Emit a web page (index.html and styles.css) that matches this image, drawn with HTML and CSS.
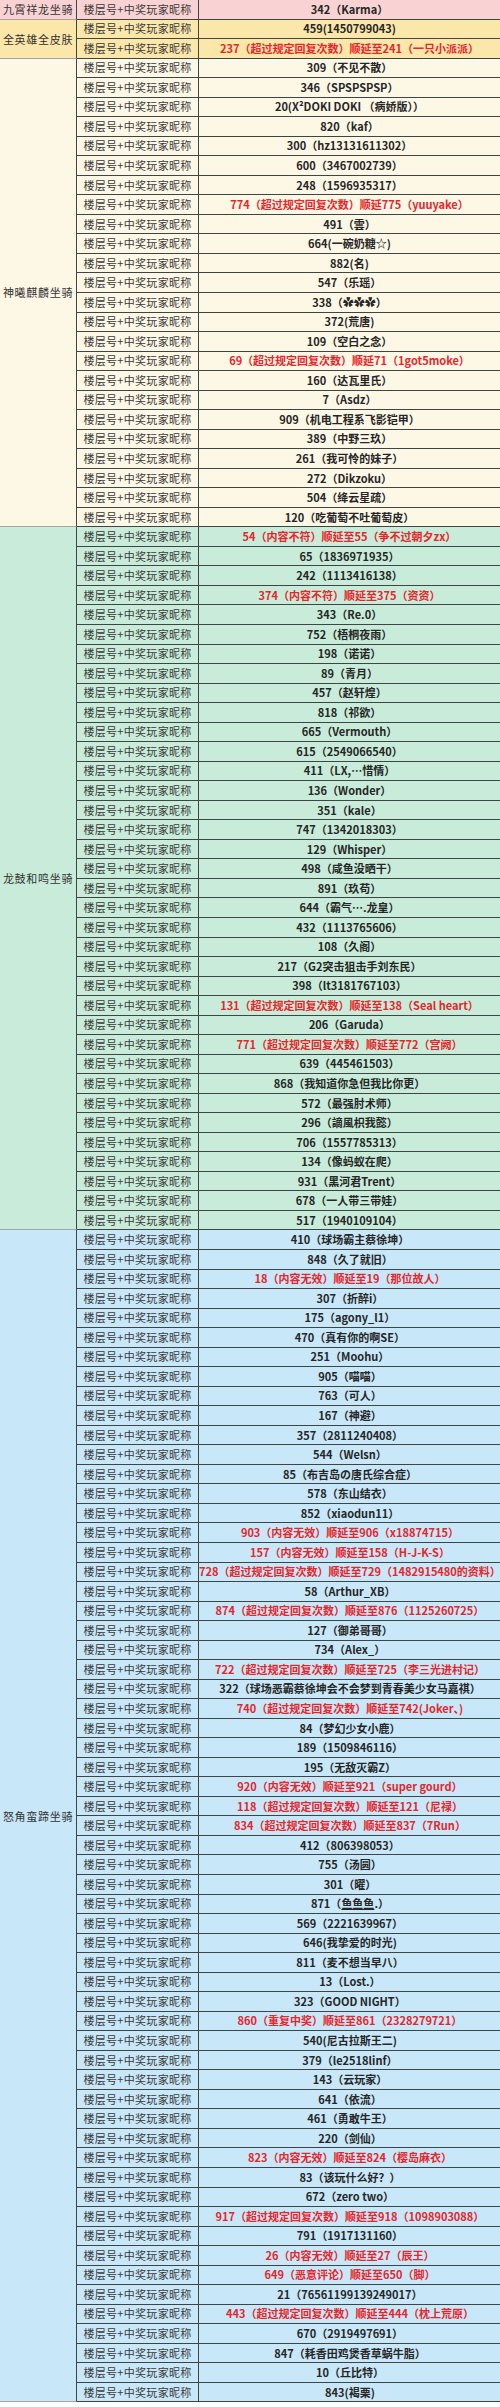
FILE: index.html
```html
<!DOCTYPE html>
<html lang="zh-CN">
<head>
<meta charset="utf-8">
<title>中奖名单</title>
<link rel="stylesheet" href="styles.css">
</head>
<body>
<div class="sheet">

<div class="section pink">
  <div class="label">九霄祥龙坐骑</div>
  <div class="rows">
    <div class="row"><div class="k">楼层号+中奖玩家昵称</div><div class="v">342（Karma）</div></div>
  </div>
</div>

<div class="section gold">
  <div class="label">全英雄全皮肤</div>
  <div class="rows">
    <div class="row"><div class="k">楼层号+中奖玩家昵称</div><div class="v">459(1450799043)</div></div>
    <div class="row"><div class="k">楼层号+中奖玩家昵称</div><div class="v red">237（超过规定回复次数）顺延至241（一只小派派）</div></div>
  </div>
</div>

<div class="section cream">
  <div class="label">神曦麒麟坐骑</div>
  <div class="rows">
    <div class="row"><div class="k">楼层号+中奖玩家昵称</div><div class="v">309（不见不散）</div></div>
    <div class="row"><div class="k">楼层号+中奖玩家昵称</div><div class="v">346（SPSPSPSP）</div></div>
    <div class="row"><div class="k">楼层号+中奖玩家昵称</div><div class="v">20(X²DOKI DOKI （病娇版））</div></div>
    <div class="row"><div class="k">楼层号+中奖玩家昵称</div><div class="v">820（kaf）</div></div>
    <div class="row"><div class="k">楼层号+中奖玩家昵称</div><div class="v">300（hz13131611302）</div></div>
    <div class="row"><div class="k">楼层号+中奖玩家昵称</div><div class="v">600（3467002739）</div></div>
    <div class="row"><div class="k">楼层号+中奖玩家昵称</div><div class="v">248（1596935317）</div></div>
    <div class="row"><div class="k">楼层号+中奖玩家昵称</div><div class="v red">774（超过规定回复次数）顺延775（yuuyake）</div></div>
    <div class="row"><div class="k">楼层号+中奖玩家昵称</div><div class="v">491（雲）</div></div>
    <div class="row"><div class="k">楼层号+中奖玩家昵称</div><div class="v">664(一碗奶糖☆)</div></div>
    <div class="row"><div class="k">楼层号+中奖玩家昵称</div><div class="v">882(名)</div></div>
    <div class="row"><div class="k">楼层号+中奖玩家昵称</div><div class="v">547（乐瑶）</div></div>
    <div class="row"><div class="k">楼层号+中奖玩家昵称</div><div class="v">338（✿✿✿）</div></div>
    <div class="row"><div class="k">楼层号+中奖玩家昵称</div><div class="v">372(荒唐)</div></div>
    <div class="row"><div class="k">楼层号+中奖玩家昵称</div><div class="v">109（空白之念）</div></div>
    <div class="row"><div class="k">楼层号+中奖玩家昵称</div><div class="v red">69（超过规定回复次数）顺延71（1got5moke）</div></div>
    <div class="row"><div class="k">楼层号+中奖玩家昵称</div><div class="v">160（达瓦里氏）</div></div>
    <div class="row"><div class="k">楼层号+中奖玩家昵称</div><div class="v">7（Asdz）</div></div>
    <div class="row"><div class="k">楼层号+中奖玩家昵称</div><div class="v">909（机电工程系飞影铠甲）</div></div>
    <div class="row"><div class="k">楼层号+中奖玩家昵称</div><div class="v">389（中野三玖）</div></div>
    <div class="row"><div class="k">楼层号+中奖玩家昵称</div><div class="v">261（我可怜的妹子）</div></div>
    <div class="row"><div class="k">楼层号+中奖玩家昵称</div><div class="v">272（Dikzoku）</div></div>
    <div class="row"><div class="k">楼层号+中奖玩家昵称</div><div class="v">504（绛云星疏）</div></div>
    <div class="row"><div class="k">楼层号+中奖玩家昵称</div><div class="v">120（吃葡萄不吐葡萄皮）</div></div>
  </div>
</div>

<div class="section green">
  <div class="label">龙鼓和鸣坐骑</div>
  <div class="rows">
    <div class="row"><div class="k">楼层号+中奖玩家昵称</div><div class="v red">54（内容不符）顺延至55（争不过朝夕zx）</div></div>
    <div class="row"><div class="k">楼层号+中奖玩家昵称</div><div class="v">65（1836971935）</div></div>
    <div class="row"><div class="k">楼层号+中奖玩家昵称</div><div class="v">242（1113416138）</div></div>
    <div class="row"><div class="k">楼层号+中奖玩家昵称</div><div class="v red">374（内容不符）顺延至375（资资）</div></div>
    <div class="row"><div class="k">楼层号+中奖玩家昵称</div><div class="v">343（Re.0）</div></div>
    <div class="row"><div class="k">楼层号+中奖玩家昵称</div><div class="v">752（梧桐夜雨）</div></div>
    <div class="row"><div class="k">楼层号+中奖玩家昵称</div><div class="v">198（诺诺）</div></div>
    <div class="row"><div class="k">楼层号+中奖玩家昵称</div><div class="v">89（青月）</div></div>
    <div class="row"><div class="k">楼层号+中奖玩家昵称</div><div class="v">457（赵轩煌）</div></div>
    <div class="row"><div class="k">楼层号+中奖玩家昵称</div><div class="v">818（祁欲）</div></div>
    <div class="row"><div class="k">楼层号+中奖玩家昵称</div><div class="v">665（Vermouth）</div></div>
    <div class="row"><div class="k">楼层号+中奖玩家昵称</div><div class="v">615（2549066540）</div></div>
    <div class="row"><div class="k">楼层号+中奖玩家昵称</div><div class="v">411（LX,…惜情）</div></div>
    <div class="row"><div class="k">楼层号+中奖玩家昵称</div><div class="v">136（Wonder）</div></div>
    <div class="row"><div class="k">楼层号+中奖玩家昵称</div><div class="v">351（kale）</div></div>
    <div class="row"><div class="k">楼层号+中奖玩家昵称</div><div class="v">747（1342018303）</div></div>
    <div class="row"><div class="k">楼层号+中奖玩家昵称</div><div class="v">129（Whisper）</div></div>
    <div class="row"><div class="k">楼层号+中奖玩家昵称</div><div class="v">498（咸鱼没晒干）</div></div>
    <div class="row"><div class="k">楼层号+中奖玩家昵称</div><div class="v">891（玖苟）</div></div>
    <div class="row"><div class="k">楼层号+中奖玩家昵称</div><div class="v">644（霸气….龙皇）</div></div>
    <div class="row"><div class="k">楼层号+中奖玩家昵称</div><div class="v">432（1113765606）</div></div>
    <div class="row"><div class="k">楼层号+中奖玩家昵称</div><div class="v">108（久阁）</div></div>
    <div class="row"><div class="k">楼层号+中奖玩家昵称</div><div class="v">217（G2突击狙击手刘东民）</div></div>
    <div class="row"><div class="k">楼层号+中奖玩家昵称</div><div class="v">398（lt3181767103）</div></div>
    <div class="row"><div class="k">楼层号+中奖玩家昵称</div><div class="v red">131（超过规定回复次数）顺延至138（Seal heart）</div></div>
    <div class="row"><div class="k">楼层号+中奖玩家昵称</div><div class="v">206（Garuda）</div></div>
    <div class="row"><div class="k">楼层号+中奖玩家昵称</div><div class="v red">771（超过规定回复次数）顺延至772（宫阙）</div></div>
    <div class="row"><div class="k">楼层号+中奖玩家昵称</div><div class="v">639（445461503）</div></div>
    <div class="row"><div class="k">楼层号+中奖玩家昵称</div><div class="v">868（我知道你急但我比你更）</div></div>
    <div class="row"><div class="k">楼层号+中奖玩家昵称</div><div class="v">572（最强肘术师）</div></div>
    <div class="row"><div class="k">楼层号+中奖玩家昵称</div><div class="v">296（謫風枳我懿）</div></div>
    <div class="row"><div class="k">楼层号+中奖玩家昵称</div><div class="v">706（1557785313）</div></div>
    <div class="row"><div class="k">楼层号+中奖玩家昵称</div><div class="v">134（像蚂蚁在爬）</div></div>
    <div class="row"><div class="k">楼层号+中奖玩家昵称</div><div class="v">931（黑河君Trent）</div></div>
    <div class="row"><div class="k">楼层号+中奖玩家昵称</div><div class="v">678（一人带三带娃）</div></div>
    <div class="row"><div class="k">楼层号+中奖玩家昵称</div><div class="v">517（1940109104）</div></div>
  </div>
</div>

<div class="section blue">
  <div class="label">怒角蛮蹄坐骑</div>
  <div class="rows">
    <div class="row"><div class="k">楼层号+中奖玩家昵称</div><div class="v">410（球场霸主蔡徐坤）</div></div>
    <div class="row"><div class="k">楼层号+中奖玩家昵称</div><div class="v">848（久了就旧）</div></div>
    <div class="row"><div class="k">楼层号+中奖玩家昵称</div><div class="v red">18（内容无效）顺延至19（那位故人）</div></div>
    <div class="row"><div class="k">楼层号+中奖玩家昵称</div><div class="v">307（折醉i）</div></div>
    <div class="row"><div class="k">楼层号+中奖玩家昵称</div><div class="v">175（agony_l1）</div></div>
    <div class="row"><div class="k">楼层号+中奖玩家昵称</div><div class="v">470（真有你的啊SE）</div></div>
    <div class="row"><div class="k">楼层号+中奖玩家昵称</div><div class="v">251（Moohu）</div></div>
    <div class="row"><div class="k">楼层号+中奖玩家昵称</div><div class="v">905（喵喵）</div></div>
    <div class="row"><div class="k">楼层号+中奖玩家昵称</div><div class="v">763（可人）</div></div>
    <div class="row"><div class="k">楼层号+中奖玩家昵称</div><div class="v">167（神避）</div></div>
    <div class="row"><div class="k">楼层号+中奖玩家昵称</div><div class="v">357（2811240408）</div></div>
    <div class="row"><div class="k">楼层号+中奖玩家昵称</div><div class="v">544（Welsn）</div></div>
    <div class="row"><div class="k">楼层号+中奖玩家昵称</div><div class="v">85（布吉岛の唐氏综合症）</div></div>
    <div class="row"><div class="k">楼层号+中奖玩家昵称</div><div class="v">578（东山结衣）</div></div>
    <div class="row"><div class="k">楼层号+中奖玩家昵称</div><div class="v">852（xiaodun11）</div></div>
    <div class="row"><div class="k">楼层号+中奖玩家昵称</div><div class="v red">903（内容无效）顺延至906（x18874715）</div></div>
    <div class="row"><div class="k">楼层号+中奖玩家昵称</div><div class="v red">157（内容无效）顺延至158（H-J-K-S）</div></div>
    <div class="row"><div class="k">楼层号+中奖玩家昵称</div><div class="v red">728（超过规定回复次数）顺延至729（1482915480的资料）</div></div>
    <div class="row"><div class="k">楼层号+中奖玩家昵称</div><div class="v">58（Arthur_XB）</div></div>
    <div class="row"><div class="k">楼层号+中奖玩家昵称</div><div class="v red">874（超过规定回复次数）顺延至876（1125260725）</div></div>
    <div class="row"><div class="k">楼层号+中奖玩家昵称</div><div class="v">127（御弟哥哥）</div></div>
    <div class="row"><div class="k">楼层号+中奖玩家昵称</div><div class="v">734（Alex_）</div></div>
    <div class="row"><div class="k">楼层号+中奖玩家昵称</div><div class="v red">722（超过规定回复次数）顺延至725（李三光进村记）</div></div>
    <div class="row"><div class="k">楼层号+中奖玩家昵称</div><div class="v">322（球场恶霸蔡徐坤会不会梦到青春美少女马嘉祺）</div></div>
    <div class="row"><div class="k">楼层号+中奖玩家昵称</div><div class="v red">740（超过规定回复次数）顺延至742(Joker、)</div></div>
    <div class="row"><div class="k">楼层号+中奖玩家昵称</div><div class="v">84（梦幻少女小鹿）</div></div>
    <div class="row"><div class="k">楼层号+中奖玩家昵称</div><div class="v">189（1509846116）</div></div>
    <div class="row"><div class="k">楼层号+中奖玩家昵称</div><div class="v">195（无敌灭霸Z）</div></div>
    <div class="row"><div class="k">楼层号+中奖玩家昵称</div><div class="v red">920（内容无效）顺延至921（super gourd）</div></div>
    <div class="row"><div class="k">楼层号+中奖玩家昵称</div><div class="v red">118（超过规定回复次数）顺延至121（尼禄）</div></div>
    <div class="row"><div class="k">楼层号+中奖玩家昵称</div><div class="v red">834（超过规定回复次数）顺延至837（7Run）</div></div>
    <div class="row"><div class="k">楼层号+中奖玩家昵称</div><div class="v">412（806398053）</div></div>
    <div class="row"><div class="k">楼层号+中奖玩家昵称</div><div class="v">755（汤圆）</div></div>
    <div class="row"><div class="k">楼层号+中奖玩家昵称</div><div class="v">301（曜）</div></div>
    <div class="row"><div class="k">楼层号+中奖玩家昵称</div><div class="v">871（<span class="ul">鱼鱼鱼</span>.）</div></div>
    <div class="row"><div class="k">楼层号+中奖玩家昵称</div><div class="v">569（2221639967）</div></div>
    <div class="row"><div class="k">楼层号+中奖玩家昵称</div><div class="v">646(我挚爱的时光)</div></div>
    <div class="row"><div class="k">楼层号+中奖玩家昵称</div><div class="v">811（麦不想当早八）</div></div>
    <div class="row"><div class="k">楼层号+中奖玩家昵称</div><div class="v">13（Lost.）</div></div>
    <div class="row"><div class="k">楼层号+中奖玩家昵称</div><div class="v">323（GOOD NIGHT）</div></div>
    <div class="row"><div class="k">楼层号+中奖玩家昵称</div><div class="v red">860（重复中奖）顺延至861（2328279721）</div></div>
    <div class="row"><div class="k">楼层号+中奖玩家昵称</div><div class="v">540(尼古拉斯王二)</div></div>
    <div class="row"><div class="k">楼层号+中奖玩家昵称</div><div class="v">379（le2518linf）</div></div>
    <div class="row"><div class="k">楼层号+中奖玩家昵称</div><div class="v">143（云玩家）</div></div>
    <div class="row"><div class="k">楼层号+中奖玩家昵称</div><div class="v">641（依流）</div></div>
    <div class="row"><div class="k">楼层号+中奖玩家昵称</div><div class="v">461（勇敢牛王）</div></div>
    <div class="row"><div class="k">楼层号+中奖玩家昵称</div><div class="v">220（剑仙）</div></div>
    <div class="row"><div class="k">楼层号+中奖玩家昵称</div><div class="v red">823（内容无效）顺延至824（樱岛麻衣）</div></div>
    <div class="row"><div class="k">楼层号+中奖玩家昵称</div><div class="v">83（该玩什么好？）</div></div>
    <div class="row"><div class="k">楼层号+中奖玩家昵称</div><div class="v">672（zero two）</div></div>
    <div class="row"><div class="k">楼层号+中奖玩家昵称</div><div class="v red">917（超过规定回复次数）顺延至918（1098903088）</div></div>
    <div class="row"><div class="k">楼层号+中奖玩家昵称</div><div class="v">791（1917131160）</div></div>
    <div class="row"><div class="k">楼层号+中奖玩家昵称</div><div class="v red">26（内容无效）顺延至27（辰王）</div></div>
    <div class="row"><div class="k">楼层号+中奖玩家昵称</div><div class="v red">649（恶意评论）顺延至650（脚）</div></div>
    <div class="row"><div class="k">楼层号+中奖玩家昵称</div><div class="v">21（76561199139249017）</div></div>
    <div class="row"><div class="k">楼层号+中奖玩家昵称</div><div class="v red">443（超过规定回复次数）顺延至444（枕上荒原）</div></div>
    <div class="row"><div class="k">楼层号+中奖玩家昵称</div><div class="v">670（2919497691）</div></div>
    <div class="row"><div class="k">楼层号+中奖玩家昵称</div><div class="v">847（耗香田鸡煲香草蜗牛脂）</div></div>
    <div class="row"><div class="k">楼层号+中奖玩家昵称</div><div class="v">10（丘比特）</div></div>
    <div class="row"><div class="k">楼层号+中奖玩家昵称</div><div class="v">843(褐栗)</div></div>
  </div>
</div>

</div>
</body>
</html>
```

FILE: styles.css
```css
* {
  box-sizing: border-box;
  margin: 0;
  padding: 0;
}

body {
  background: #ffffff;
  font-family: "Noto Sans CJK SC", "Noto Sans", sans-serif;
  font-size: 11px;
  color: #222;
  width: 500px;
}

.sheet {
  width: 500px;
}

.section {
  display: flex;
}

.label {
  width: 77px;
  flex: none;
  display: flex;
  align-items: center;
  justify-content: center;
  border-right: 1px solid #3d4545;
  border-bottom: 1px solid #a5a5a5;
  letter-spacing: 0.7px;
  color: #333;
  font-size: 11px;
}

.rows {
  flex: 1;
}

.row {
  display: grid;
  grid-template-columns: 122px 1fr;
  height: 19.54px;
  border-bottom: 1px solid #3d4545;
}

.k {
  border-right: 1px solid #3d4545;
  display: flex;
  align-items: center;
  justify-content: center;
  color: #3a3a3a;
  letter-spacing: 0.3px;
  line-height: 1;
  white-space: nowrap;
}

.v {
  display: flex;
  align-items: center;
  justify-content: center;
  font-weight: 700;
  color: #262626;
  line-height: 1;
  white-space: nowrap;
}

.v.red {
  color: #e5262b;
}

.ul {
  text-decoration: underline;
}

.pink {
  background: #f9d3d3;
}

.gold {
  background: #fce7ab;
}

.cream {
  background: #fdf7e6;
}

.green {
  background: #c8ecd9;
}

.blue {
  background: #c8e7f8;
}
```
